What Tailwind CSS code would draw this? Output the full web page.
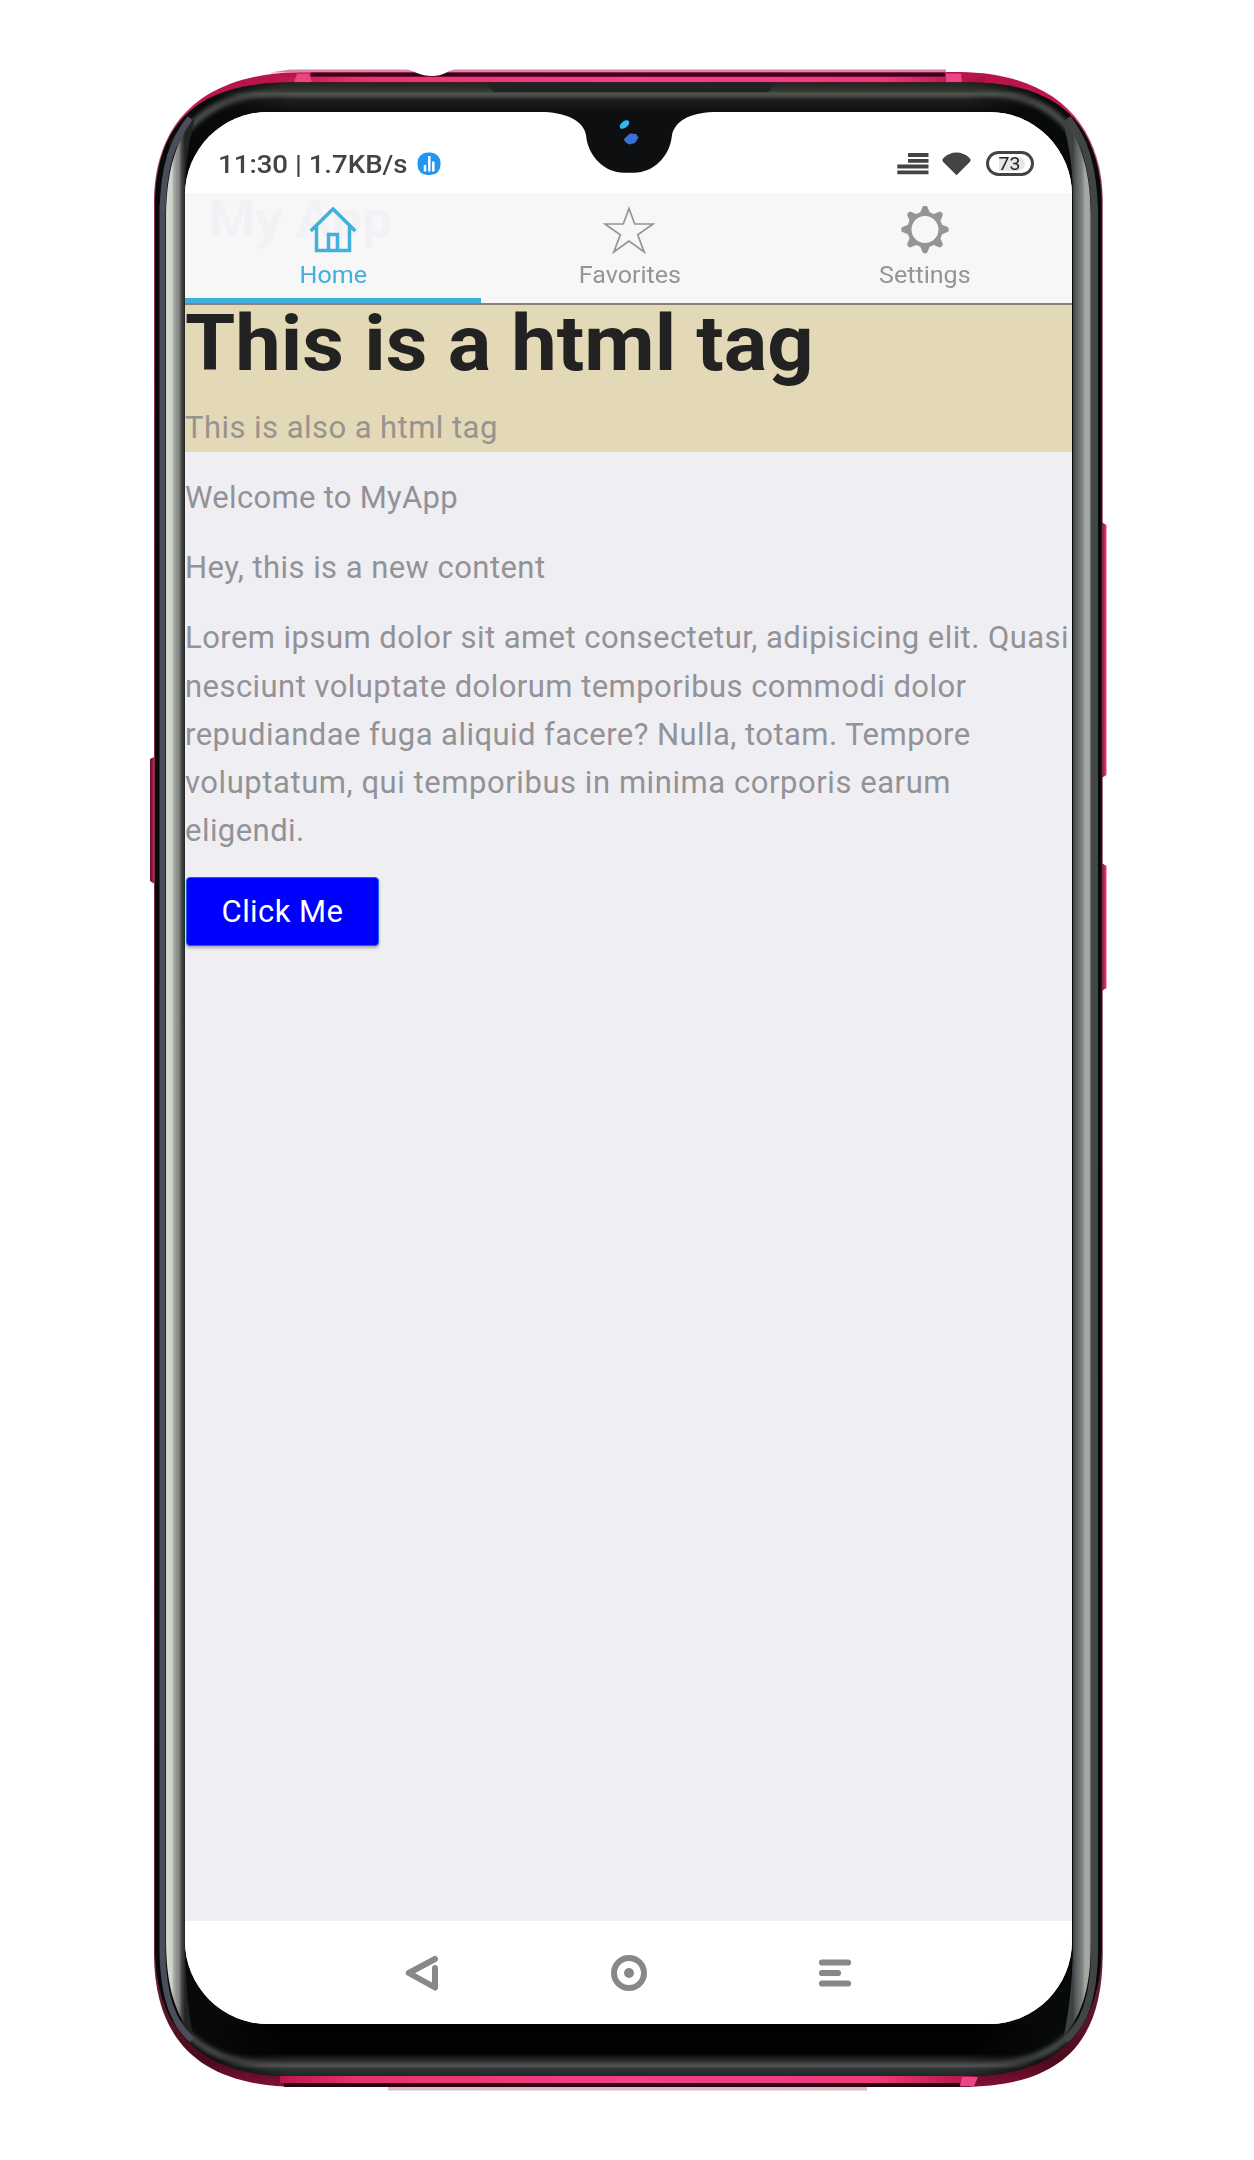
<!DOCTYPE html>
<html lang="en">
<head>
<meta charset="utf-8">
<title>My App</title>
<script src="https://cdn.jsdelivr.net/npm/@tailwindcss/browser@4"></script>
</head>
<body class="bg-white">
<div class="relative h-[2160px] w-[1254px] overflow-hidden pt-[112px] pl-[185px] font-[Roboto,sans-serif]">

  <!-- Phone body -->
  <svg class="absolute inset-0" width="1254" height="2160" viewBox="0 0 1254 2160" fill="none">
    <defs>
      <linearGradient id="rim" x1="0" y1="69" x2="0" y2="2091" gradientUnits="userSpaceOnUse">
        <stop offset="0" stop-color="#b3134a"/><stop offset=".015" stop-color="#c0174c"/><stop offset=".04" stop-color="#d06080"/><stop offset=".06" stop-color="#8c3350"/>
        <stop offset=".94" stop-color="#6b2038"/><stop offset=".985" stop-color="#4a0a1c"/><stop offset="1" stop-color="#8c1038"/>
      </linearGradient>
      <linearGradient id="left" x1="165.500" y1="0" x2="185" y2="0" gradientUnits="userSpaceOnUse">
        <stop offset="0" stop-color="#b9bdb5"/><stop offset=".08" stop-color="#d6dad1"/><stop offset=".34" stop-color="#cfd3ca"/><stop offset=".42" stop-color="#a8aba6"/><stop offset=".7" stop-color="#80837f"/><stop offset=".82" stop-color="#4a4c4a"/><stop offset="1" stop-color="#222423"/>
      </linearGradient>
      <linearGradient id="right" x1="1073" y1="0" x2="1091" y2="0" gradientUnits="userSpaceOnUse">
        <stop offset="0" stop-color="#3c4242"/><stop offset=".15" stop-color="#565d5e"/><stop offset=".5" stop-color="#7b8180"/><stop offset=".65" stop-color="#a2a5a0"/><stop offset=".9" stop-color="#a7aaa5"/><stop offset="1" stop-color="#5b5e5b"/>
      </linearGradient>
      <linearGradient id="top" x1="0" y1="82" x2="0" y2="112" gradientUnits="userSpaceOnUse">
        <stop offset="0" stop-color="#20221e"/><stop offset=".28" stop-color="#31342f"/><stop offset=".4" stop-color="#52554f"/><stop offset=".5" stop-color="#3b3d3a"/><stop offset=".6" stop-color="#1d1f1d"/><stop offset="1" stop-color="#0d0e0e"/>
      </linearGradient>
      <linearGradient id="bottom" x1="0" y1="2025" x2="0" y2="2076" gradientUnits="userSpaceOnUse">
        <stop offset="0" stop-color="#000"/><stop offset=".56" stop-color="#030303"/><stop offset=".68" stop-color="#262626"/><stop offset=".8" stop-color="#555"/><stop offset=".86" stop-color="#2c3432"/><stop offset="1" stop-color="#1d2826"/>
      </linearGradient>
      <linearGradient id="pink" x1="270" y1="0" x2="985" y2="0" gradientUnits="userSpaceOnUse">
        <stop offset="0" stop-color="#b3134a"/><stop offset=".12" stop-color="#e8316f"/><stop offset=".5" stop-color="#f44088"/><stop offset=".85" stop-color="#ee3a7c"/><stop offset="1" stop-color="#a50f45"/>
      </linearGradient>
      <linearGradient id="btn" x1="0" y1="0" x2="1" y2="0">
        <stop offset="0" stop-color="#560d2b"/><stop offset=".5" stop-color="#b0184d"/><stop offset="1" stop-color="#d9457a"/>
      </linearGradient>
      <linearGradient id="fade" x1="215" y1="0" x2="1042" y2="0" gradientUnits="userSpaceOnUse">
        <stop offset="0" stop-color="#000"/><stop offset=".09" stop-color="#fff"/><stop offset=".91" stop-color="#fff"/><stop offset="1" stop-color="#000"/>
      </linearGradient>
      <mask id="ends" maskUnits="userSpaceOnUse" x="0" y="0" width="1254" height="2160"><path d="M0 0H1254V2160H0Z" fill="url(#fade)"/></mask>
      <filter id="soft" x="-20%" y="-20%" width="140%" height="140%"><feGaussianBlur stdDeviation="2"/></filter>
      <clipPath id="body"><path d="M155 205C155 118 203 82.500 290 82.500H970C1054 82.500 1101.500 120 1101.700 205V1950C1100 2032 1055 2076 970 2076H290C208 2076 156 2037 155 1950Z"/></clipPath>
    </defs>
    <!-- side keys -->
    <path d="M156 756 150 759V881L156 885Z" fill="url(#btn)"/>
    <path d="M1100 521 1106.500 525V775L1100 779Z" fill="url(#btn)"/>
    <path d="M1100 862 1106.500 866V988L1100 992Z" fill="url(#btn)"/>
    <!-- coloured rim -->
    <path d="M154 200C155 124 200 74 300 72H960C1050 73 1102 120 1102.700 200V1955C1102 2045 1060 2087 960 2087H300C205 2087 155 2045 154 1955Z" fill="url(#rim)"/>
    <path d="M290 69.500H946V72.500H270Z" fill="#e283a4"/>
    <path d="M311 72.500H945V76.500H311Z" fill="#38001b"/>
    <path d="M270 77H985V82.500H270Z" fill="url(#pink)"/>
    <path d="M297 73.500H309L312 82.500H294Z" fill="#ec4585"/>
    <path d="M946 73.500H961L962 82.500H946Z" fill="#ec4585"/>
    <path d="M403 68H458C446 71 444 76 432 76S415 71 403 68Z" fill="#fff"/>
    <path d="M280 2076H975V2083H280Z" fill="url(#pink)"/>
    <path d="M284 2083H960V2087H284Z" fill="#2b0010"/>
    <path d="M388 2087H867V2090.500H388Z" fill="#e2b9c7"/>
    <path d="M962 2077H978L974 2086H960Z" fill="#ec4585"/>
    <!-- glass edge -->
    <g clip-path="url(#body)">
      <path d="M150 80H1110V2080H150Z" fill="#080909"/>
      <g filter="url(#soft)">
        <path d="M174 146C202 106 232 92 300 92" stroke="#4c4f4b" stroke-width="7"/>
        <path d="M1083 146C1055 106 1030 92 960 92" stroke="#4c4f4b" stroke-width="7"/>
        <path d="M178 2024C200 2050 225 2066 300 2066" stroke="#444a47" stroke-width="7"/>
        <path d="M1080 2024C1058 2050 1035 2066 960 2066" stroke="#444a47" stroke-width="7"/>
      </g>
      <g mask="url(#ends)">
        <path d="M215 82H1042V113H215Z" fill="url(#top)"/>
        <path d="M215 2024H1042V2076H215Z" fill="url(#bottom)"/>
      </g>
      <path d="M485 82H777L768 92H494Z" fill="#20231f"/>
      <path d="M162.500 215C163 165 173 140 190 118M162.500 205V1950C163 2000 175 2025 192 2040" stroke="#4b4d5a" stroke-width="6"/>
      <path d="M1094.500 215C1094 165 1084 140 1068 118M1094.500 205V1950C1094 2000 1083 2025 1066 2040" stroke="#414544" stroke-width="7"/>
      <path d="M166 215C167 165 178 138 195 118C188 145 185 165 185 200V1950C186 1985 188 2010 193 2036C177 2016 166 1990 166 1940Z" fill="url(#left)"/>
      <path d="M1091 215C1090 165 1079 138 1062 118C1069 145 1073 165 1073 200V1950C1072 1985 1069 2010 1064 2036C1081 2016 1091 1990 1091 1940Z" fill="url(#right)"/>
    </g>
  </svg>

  <!-- Screen -->
  <main class="relative flex h-[1912px] w-[887px] flex-col overflow-hidden rounded-[83px] bg-[#efeef3]">
    <header class="flex h-[81px] shrink-0 items-center justify-between bg-white pt-[22px] pr-[38px] pl-[33px]">
      <div class="flex items-center">
        <span class="w-[199px] origin-left scale-x-[1.05] pt-[2px] text-[26.3px] leading-[31px] font-medium whitespace-nowrap text-[#444]">11:30 | 1.7KB/s</span>
        <svg width="24" height="24" viewBox="0 0 24 24"><rect x=".5" y=".5" width="23" height="22.600" rx="10" fill="#2196f3"/><path d="M8 13v6.500M12.300 4v15.500M16.300 9.500v10" stroke="#fff" stroke-width="2.500"/></svg>
      </div>
      <div class="flex items-center">
        <svg width="32" height="24" viewBox="0 0 32 24" fill="#444"><path d="M11 1h20.500v3.900H11zM11 6.900h20.500v3.900H11zM.3 12.600h31.200v3.900H.3zM.3 18.400h31.200v3.900H.3z"/></svg>
        <svg class="ml-[13px]" width="29" height="26" viewBox="0 0 29 26" fill="#444"><path d="M14.500 24.300 1.200 11Q-.5 8.800 1.500 7Q7 1.500 14.500 1.500T27.500 7Q29.500 8.800 27.800 11Z"/></svg>
        <div class="ml-[15px] flex h-[25px] w-[48px] items-center justify-center rounded-full border-[3.500px] border-[#444] bg-white">
          <span class="ml-1 rounded-r-full bg-[#e6e6e6] pr-[5px] text-[18.5px] leading-[14px] text-[#222]"><span class="inline-block scale-x-[1.05]">73</span></span>
        </div>
      </div>
    </header>

    <nav class="relative grid h-[112px] shrink-0 grid-cols-3 border-b-2 border-[#88837c] bg-[#f7f7f7]">
      <span class="absolute top-[-4px] left-[23px] origin-left scale-x-[1.05] text-[51.5px] leading-[62px] font-bold whitespace-nowrap text-[#f2f1f6]">My App</span>
      <div class="relative flex flex-col items-center border-b-[5px] border-[#40b0dc] pt-[13px] pl-px text-[#40b0dc]">
        <svg class="shrink-0" width="48" height="48" viewBox="0 0 48 48" fill="none" stroke="currentColor" stroke-width="3.500"><path d="M1.700 25 24 3 46.300 25M7.500 20v24.600h33V20M19.500 44.500V28.500h9v16"/></svg>
        <span class="mt-[7px] scale-x-[1.045] text-[24px] leading-[29px]">Home</span>
      </div>
      <div class="relative flex flex-col items-center pt-[13px] pl-[2px] text-[#959595]">
        <svg class="shrink-0" width="52" height="48" viewBox="0 0 52 48" fill="none" stroke="currentColor" stroke-width="1.700"><path d="M26 2.500 31.700 18H50L34.700 28.700 41.200 46 26 35 10.800 46 17.300 28.700 2 18H20.300Z"/></svg>
        <span class="mt-[7px] scale-x-[1.045] text-[24px] leading-[29px]">Favorites</span>
      </div>
      <div class="relative flex flex-col items-center pt-[13px] pl-[2px] text-[#959595]">
        <svg class="shrink-0" width="48" height="48" viewBox="-24 -23.500 48 48" fill="currentColor">
          <circle r="15.600" fill="none" stroke="currentColor" stroke-width="4.200"/>
          <g id="teeth"><path id="tooth" d="M-5-16.500-2.500-22.500Q-2-23.700-1-23.700H1Q2-23.700 2.500-22.500L5-16.500Z"/><use href="#tooth" transform="rotate(90)"/><use href="#tooth" transform="rotate(180)"/><use href="#tooth" transform="rotate(270)"/></g>
          <use href="#teeth" transform="rotate(45)"/>
        </svg>
        <span class="mt-[7px] scale-x-[1.045] text-[24px] leading-[29px]">Settings</span>
      </div>
    </nav>

    <section class="flex grow flex-col items-start text-[31px] leading-[48.3px] tracking-[0.45px] text-[#929297]">
      <div class="h-[147px] w-full bg-[#e3d9b7] pt-[3px]">
        <h1 class="w-fit origin-left scale-x-[1.055] text-[77px] leading-[72px] font-bold tracking-normal whitespace-nowrap text-[#222]">This is a html tag</h1>
        <p class="mt-[24px] w-fit text-[#969390]">This is also a html tag</p>
      </div>
      <p class="mt-[22px] tracking-[0.3px]">Welcome to MyApp</p>
      <p class="mt-[21.700px]">Hey, this is a new content</p>
      <p class="mt-[22px] whitespace-nowrap">Lorem ipsum dolor sit amet consectetur, adipisicing elit. Quasi<br>nesciunt voluptate dolorum temporibus commodi dolor<br>repudiandae fuga aliquid facere? Nulla, totam. Tempore<br><span class="tracking-[0.56px]">voluptatum, qui temporibus in minima corporis earum</span><br>eligendi.</p>
      <button class="mt-[21px] ml-px flex h-[69px] w-[193px] items-center justify-center rounded-[4px] border-[1.500px] border-[#1763ee] bg-[#0000ff] pt-[2px] text-white shadow-[0_2px_3px_rgba(0,0,0,0.3)]">Click Me</button>
    </section>

    <footer class="flex h-[103px] shrink-0 items-center justify-center gap-[169px] bg-white">
      <svg width="36" height="38" viewBox="0 0 36 38" fill="none" stroke="#888" stroke-width="6" stroke-linecap="round" stroke-linejoin="round"><path d="M30 5 3.800 19 30 33.500V14"/></svg>
      <svg width="38" height="38" viewBox="0 0 38 38" fill="#888"><circle cx="19" cy="19" r="15" fill="none" stroke="#888" stroke-width="6"/><circle cx="19" cy="19" r="5"/></svg>
      <svg width="36" height="38" viewBox="0 0 36 38" stroke="#888" stroke-width="6.200" stroke-linecap="round"><path d="M5 8.500H31M5 19H21M5 29.500H31"/></svg>
    </footer>
  </main>

  <!-- Camera notch -->
  <svg class="absolute top-[110px] left-[540px]" width="180" height="66" viewBox="540 110 180 66">
    <path d="M545 110V112C568 113 584 122 586 135C588 157 605 172.700 624 172.700H634C653 172.700 670 157 672 135C675 122 688 113 713 112V110Z" fill="#0e0f10"/>
    <ellipse cx="624.500" cy="124.500" rx="5.500" ry="3.200" transform="rotate(-38 624.500 124.500)" fill="#35b6f2"/>
    <path d="M624 139 630 133.500 636 134 638.500 137.500 635 143 629 144.500 625 142Z" fill="#3b6fdc"/>
  </svg>
</div>
</body>
</html>
